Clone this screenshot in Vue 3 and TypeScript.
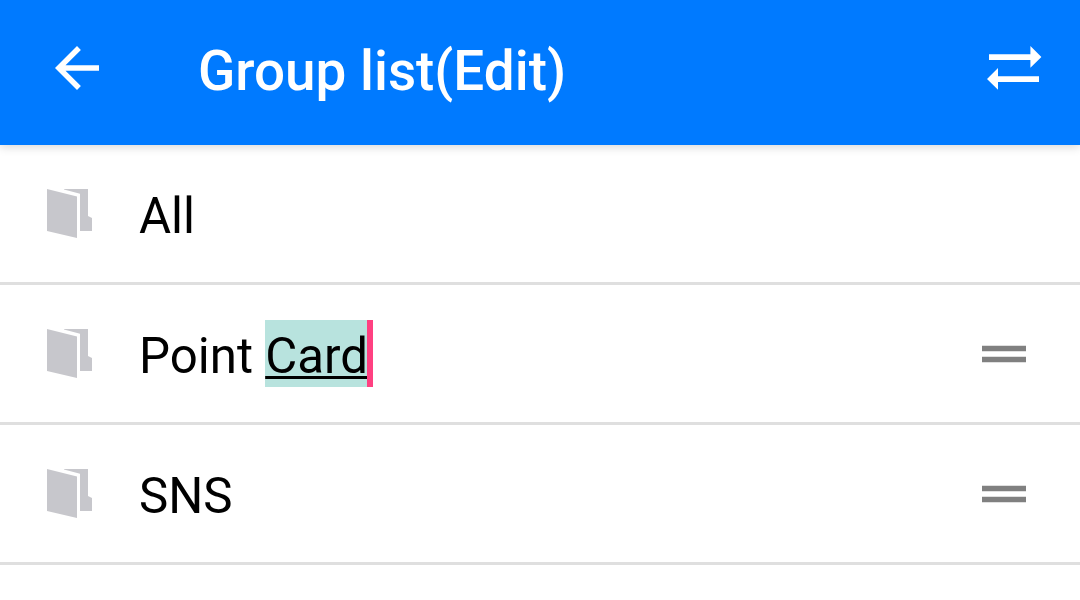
<script setup lang="ts">
interface Group {
  text: string
  composing?: string
  movable: boolean
}

const groups: Group[] = [
  { text: 'All', movable: false },
  { text: 'Point ', composing: 'Card', movable: true },
  { text: 'SNS', movable: true },
]
</script>

<template>
  <div class="screen">
    <header class="bar">
      <svg class="back" viewBox="0 0 24 24" aria-label="Back">
        <path d="M20 11H7.83l5.59-5.59L12 4l-8 8 8 8 1.41-1.41L7.83 13H20z" />
      </svg>
      <h1 class="title">Group list(Edit)</h1>
      <svg class="swap" viewBox="0 0 55 44" aria-label="Reorder">
        <path d="M2 8.2H43.4V0L54.4 11 43.4 21.8V14H2z" />
        <path d="M52 30.2H11V22L0 33 11 43.8V36H52z" />
      </svg>
    </header>
    <ul class="list">
      <li v-for="group in groups" :key="group.text" class="row">
        <svg class="folder" viewBox="0 0 45 49">
          <path d="M0 0L30 7.6V49L0 42z" />
          <path d="M17 0H41V27L45 29V42H33V4.7L17 0.6z" />
        </svg>
        <span class="name">{{ group.text }}<span v-if="group.composing" class="composing">{{ group.composing }}</span></span>
        <span v-if="group.composing" class="caret"></span>
        <span v-if="group.movable" class="handle"><i></i><i></i></span>
      </li>
    </ul>
  </div>
</template>

<style>
body {
  margin: 0;
  background: #fff;
}
</style>

<style scoped>
.screen {
  width: 1080px;
  height: 600px;
  overflow: hidden;
  background: #fff;
  font-family: Roboto, "Liberation Sans", sans-serif;
}
.bar {
  display: flex;
  position: relative;
  height: 145px;
  box-sizing: border-box;
  padding: 0 38px 0 44px;
  background: #007aff;
  box-shadow: 0 2px 9px rgba(0, 0, 0, 0.16);
}
.back {
  width: 66px;
  height: 66px;
  margin-top: 35px;
  fill: #fff;
}
.title {
  margin: 39px 0 0 88px;
  font-size: 54.8px;
  line-height: 64px;
  font-weight: 500;
  color: #fff;
  white-space: nowrap;
}
.swap {
  width: 55px;
  height: 44px;
  margin: 46px 0 0 auto;
  fill: #fff;
}
.list {
  margin: 0;
  padding: 0;
  list-style: none;
}
.row {
  display: flex;
  align-items: flex-start;
  box-sizing: border-box;
  height: 140px;
  padding: 0 54px 0 47px;
  border-bottom: 3px solid #dfdfdf;
}
.folder {
  width: 45px;
  height: 49px;
  margin-top: 44px;
  fill: #c7c7cc;
}
.name {
  margin: 35px 0 0 47px;
  font-size: 49.2px;
  line-height: 73px;
  color: #000;
  white-space: pre;
}
.composing {
  display: inline-block;
  height: 67px;
  background: #b8e3de;
  text-decoration: underline;
  text-decoration-thickness: 2.5px;
  text-underline-offset: 3px;
  text-decoration-skip-ink: none;
}
.caret {
  width: 6px;
  height: 67px;
  margin: 35px 0 0 -1px;
  background: #ff4081;
}
.handle {
  display: grid;
  gap: 4px;
  margin: 60px 0 0 auto;
}
.handle i {
  width: 44px;
  height: 5px;
  border: solid #e0e0e0;
  border-width: 1px 0;
  background: #808080;
}
</style>
